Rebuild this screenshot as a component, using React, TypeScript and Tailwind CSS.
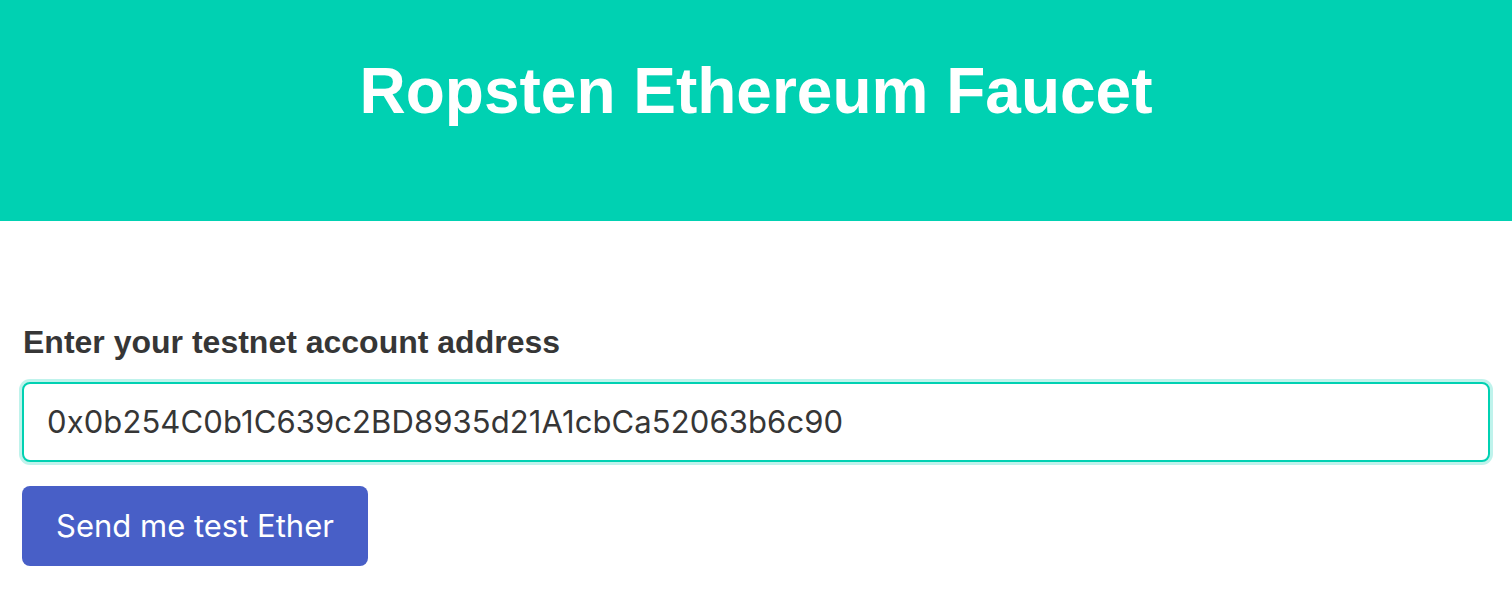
import React from "react";

export default function App() {
  return (
    <div className="w-[1512px] h-[590px] bg-white overflow-hidden">
      <header className="h-[221px] bg-[#00d1b2] flex justify-center pt-[55px]">
        <h1
          className="text-white font-bold text-[64px] leading-[72px] h-[72px]"
          style={{ fontFamily: '"Liberation Sans", Arial, sans-serif' }}
        >
          Ropsten Ethereum Faucet
        </h1>
      </header>
      <main className="px-[22px] pt-[106px]">
        <label
          className="block text-[#363636] font-bold text-[32px] leading-[31px] pl-[1px]"
          style={{ fontFamily: '"Liberation Sans", Arial, sans-serif' }}
        >
          Enter your testnet account address
        </label>
        <div className="mt-[24px] h-[80px] w-full rounded-[8px] border-2 border-[#00d1b2] shadow-[0_0_0_3px_rgba(0,209,178,0.25)] flex items-center pl-[23px] bg-white">
          <span
            className="text-[#363636] text-[31px] tracking-[0.1px]"
            style={{ fontFamily: 'Inter, "Noto Sans", sans-serif' }}
          >
            0x0b254C0b1C639c2BD8935d21A1cbCa52063b6c90
          </span>
        </div>
        <button
          className="mt-[24px] h-[80px] w-[346px] rounded-[8px] bg-[#485fc7] text-white text-[31px] flex items-center justify-center"
          style={{ fontFamily: 'Inter, "Noto Sans", sans-serif' }}
        >
          Send me test Ether
        </button>
      </main>
    </div>
  );
}
